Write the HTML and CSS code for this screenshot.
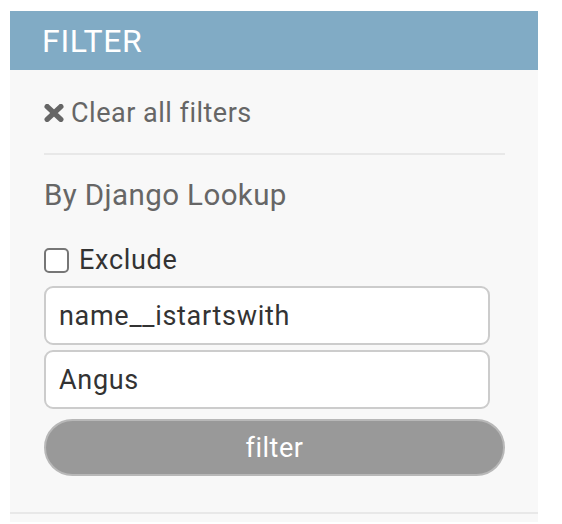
FILE: index.html
```html
<!DOCTYPE html>
<html lang="en">
<head>
<meta charset="utf-8">
<title>Filter</title>
<link rel="stylesheet" href="styles.css">
</head>
<body>
<div class="filter-panel">
  <h2 class="filter-title">Filter</h2>
  <div class="filter-body">
    <div class="clear-row">
      <a class="clear-link" href="#"><svg class="clear-icon" width="20" height="18" viewBox="0 0 20 18" aria-hidden="true"><path d="M3.2 2.6 L16.8 15.4 M16.8 2.6 L3.2 15.4" stroke="#666666" stroke-width="5.4" stroke-linecap="round" fill="none"/></svg>Clear all filters</a>
    </div>
    <h3 class="lookup-title">By Django Lookup</h3>
    <form class="lookup-form">
      <label class="exclude-row"><input class="checkbox" type="checkbox"><span>Exclude</span></label>
      <input class="text-input" type="text" value="name__istartswith">
      <input class="text-input" type="text" value="Angus">
      <button class="filter-btn" type="button">filter</button>
    </form>
  </div>
  <div class="filter-rest"></div>
</div>
</body>
</html>
```

FILE: styles.css
```css
* { box-sizing: border-box; }

body {
  margin: 0;
  background: #ffffff;
  font-family: Roboto, "Liberation Sans", sans-serif;
}

.filter-panel {
  margin: 11px 0 0 10px;
  width: 528px;
  background: #f8f8f8;
}

.filter-title {
  margin: 0;
  height: 59px;
  padding: 0 32px;
  display: flex;
  align-items: center;
  background: #81abc5;
  color: #ffffff;
  font-weight: 400;
  font-size: 32px;
  letter-spacing: 0.7px;
  text-transform: uppercase;
}

.filter-body {
  padding: 28px 33px 36px 34px;
  border-bottom: 2px solid #e8e8e8;
}

.clear-row {
  padding-bottom: 25px;
  border-bottom: 2px solid #e8e8e8;
}

.clear-link {
  display: flex;
  align-items: center;
  gap: 7px;
  color: #666666;
  text-decoration: none;
  font-size: 27px;
  letter-spacing: 0.5px;
  line-height: 30px;
}

.clear-icon {
  flex: none;
  display: block;
  margin-top: -1px;
}

.lookup-title {
  margin: 23px 0 0;
  font-weight: 400;
  font-size: 29.5px;
  letter-spacing: 0.4px;
  line-height: 34px;
  color: #666666;
}

.lookup-form {
  display: flex;
  flex-direction: column;
  margin-top: 33px;
}

.exclude-row {
  display: flex;
  align-items: center;
  gap: 10px;
  font-size: 27px;
  letter-spacing: 0.7px;
  line-height: 30px;
  color: #333333;
}

.checkbox {
  appearance: none;
  -webkit-appearance: none;
  margin: 0;
  width: 25px;
  height: 25px;
  border: 2px solid #767676;
  border-radius: 5px;
  background: #ffffff;
}

.text-input {
  margin: 11px 0 0;
  width: 446px;
  height: 59px;
  padding: 0 13px;
  border: 2px solid #cccccc;
  border-radius: 9px;
  background: #ffffff;
  font-family: inherit;
  font-size: 27px;
  letter-spacing: 0.7px;
  color: #333333;
  outline: none;
}

.text-input + .text-input {
  margin-top: 5px;
}

.filter-btn {
  margin-top: 10px;
  width: 461px;
  height: 57px;
  border: 2px solid #b8b8b8;
  border-radius: 30px;
  background: #999999;
  color: #ffffff;
  font-family: inherit;
  font-size: 27px;
  letter-spacing: 0.5px;
  padding: 0;
}

.filter-rest {
  height: 8px;
}
```
